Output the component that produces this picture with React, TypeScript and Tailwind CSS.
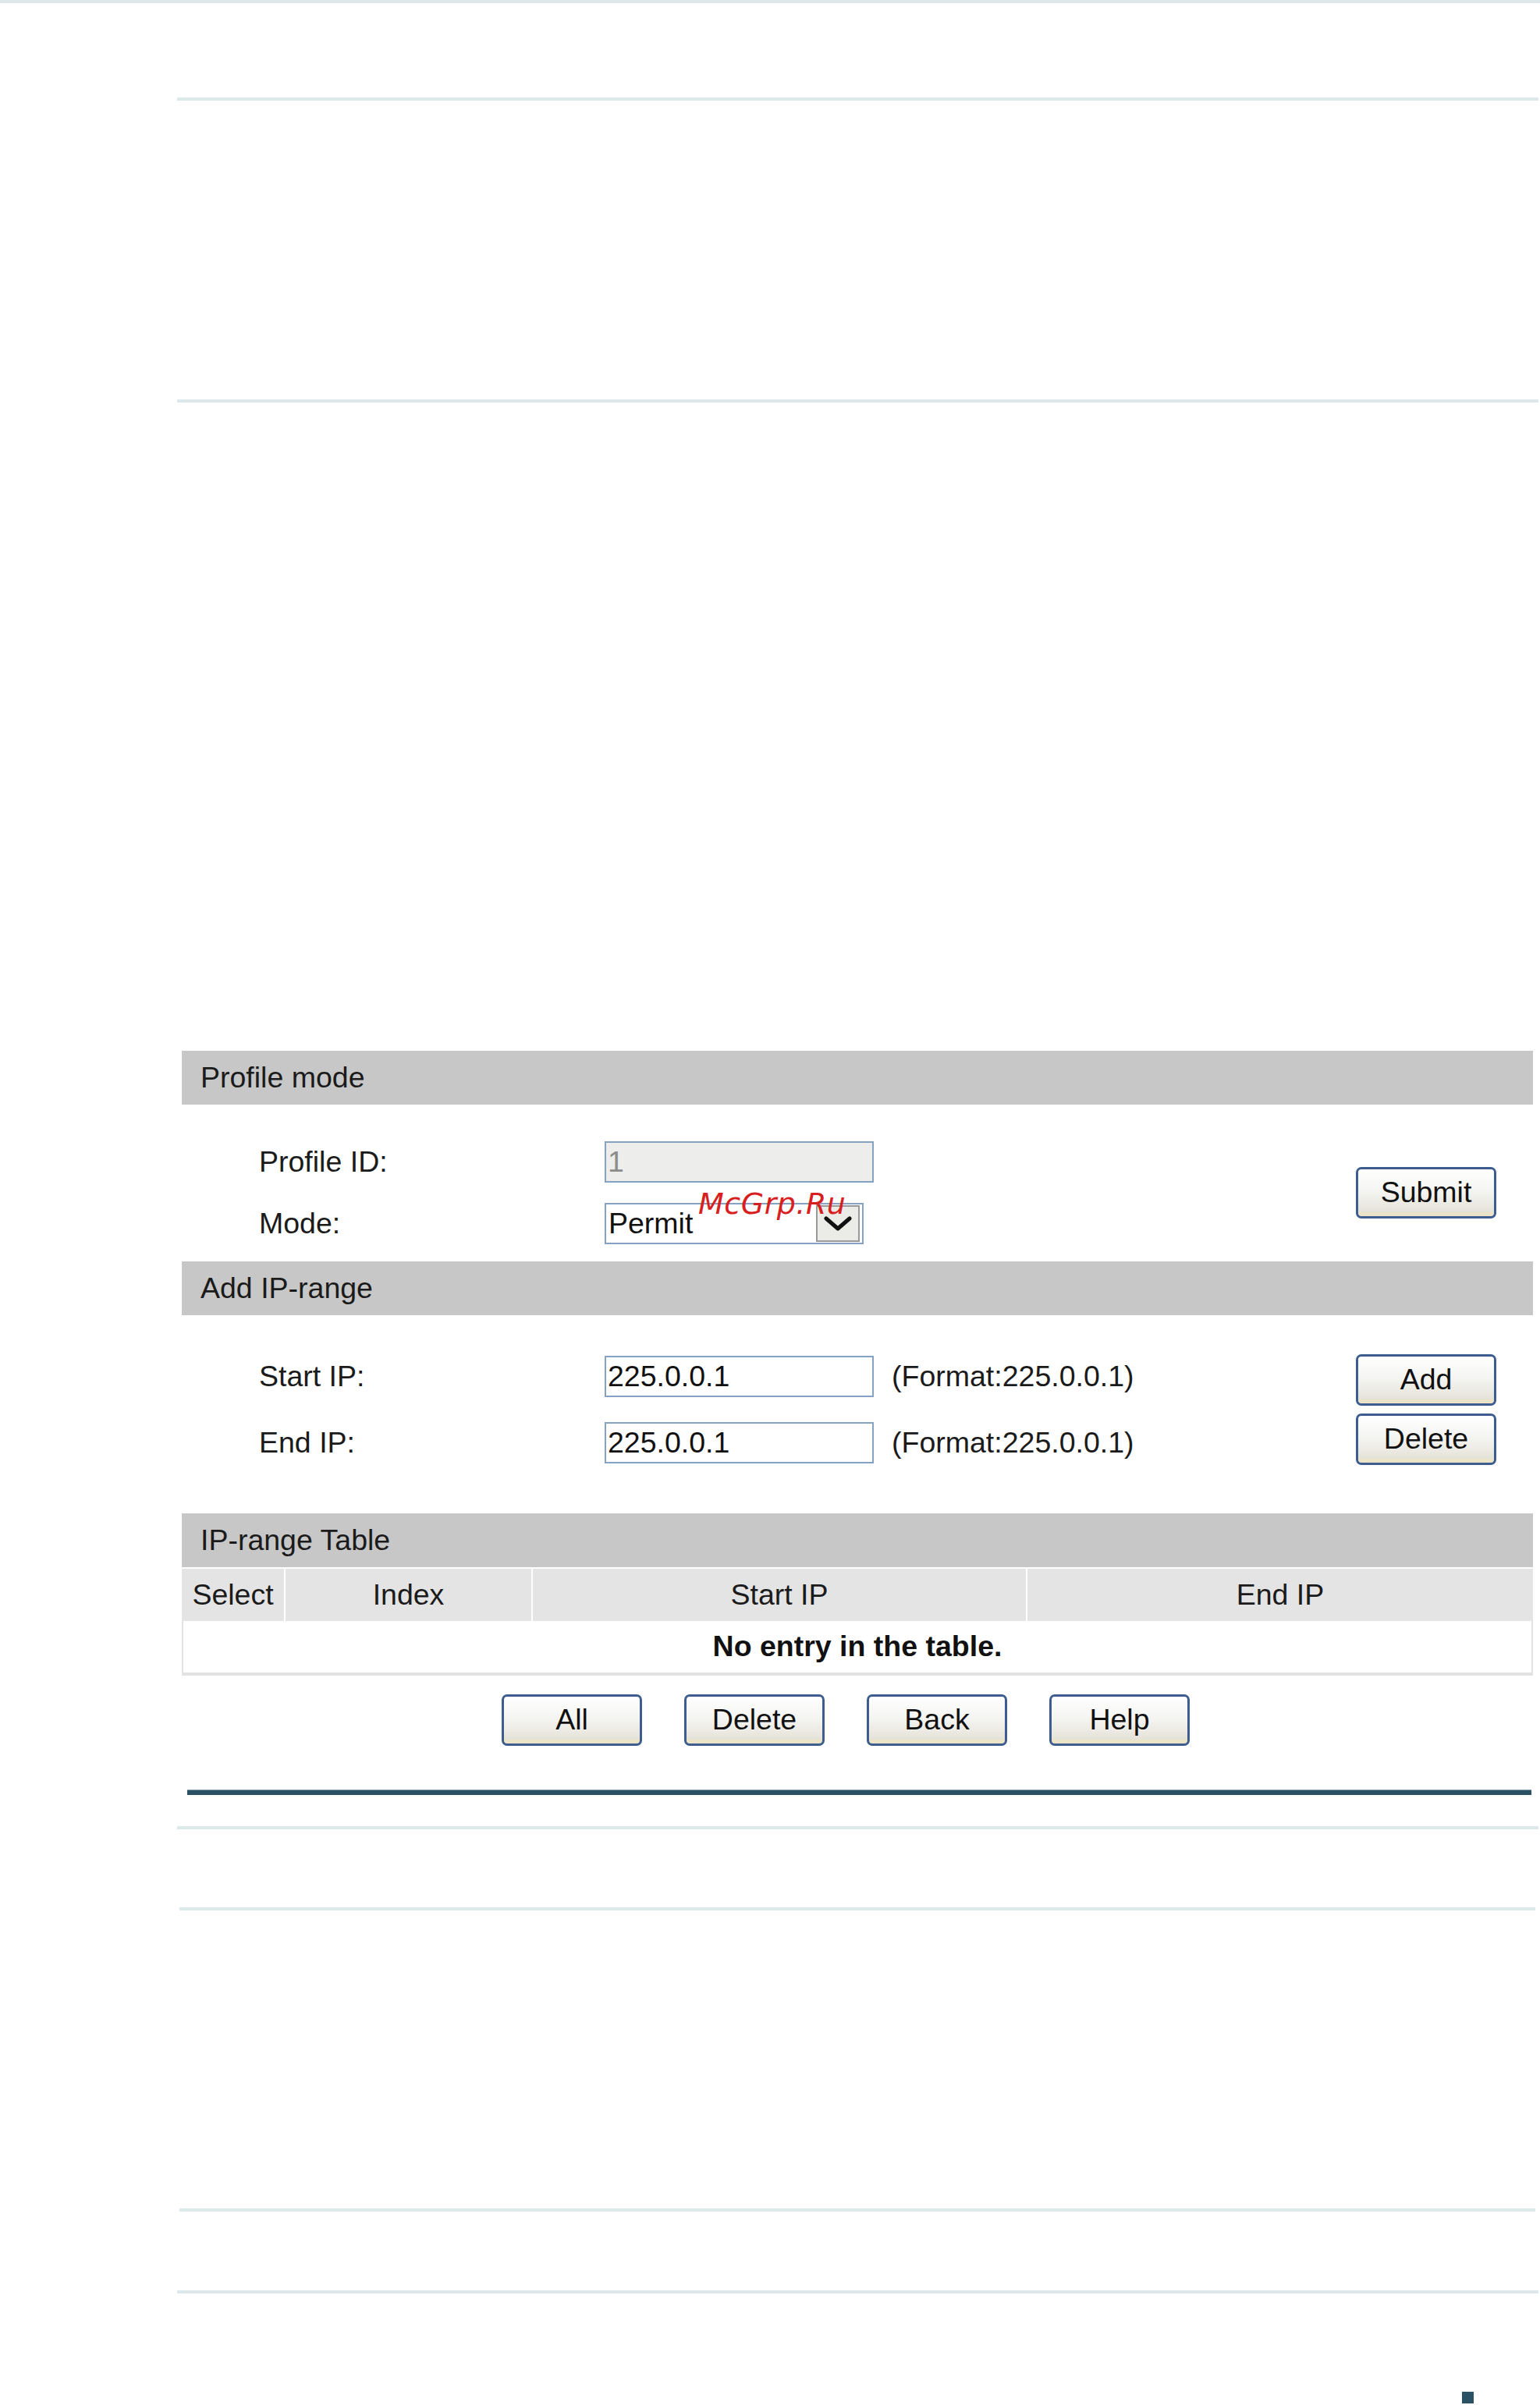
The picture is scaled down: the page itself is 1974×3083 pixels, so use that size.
const font = "font-['Liberation_Sans',Arial,sans-serif]";

function Rule({ className = "" }: { className?: string }) {
  return <div className={`h-[4px] bg-[#dde8ea] ${className}`} />;
}

function XpButton({ label, className = "" }: { label: string; className?: string }) {
  return (
    <button
      type="button"
      className={`flex h-[66px] w-[180px] items-center justify-center rounded-[7px] border-[3px] border-[#3c5d8d] bg-linear-to-b from-[#ffffff] via-[#f3f3f0] to-[#e2dfd3] text-[37.5px] leading-none text-[#111] shadow-[inset_0_-5px_0_#ece4c8] ${className}`}
    >
      {label}
    </button>
  );
}

function SectionHeader({ title }: { title: string }) {
  return (
    <div className="flex h-[69px] items-center bg-[#c7c7c7] pl-[24px] text-[37.5px] leading-none text-[#1b1b1b]">
      {title}
    </div>
  );
}

function TextBox({ value, disabled = false }: { value: string; disabled?: boolean }) {
  return (
    <div
      className={`flex h-[53px] w-[345px] items-center border-2 border-[#86a2c2] pl-[2px] text-[37.5px] leading-none ${
        disabled ? "bg-[#ededeb] text-[#8c8c8c]" : "bg-white text-[#111]"
      }`}
    >
      {value}
    </div>
  );
}

function ModeSelect() {
  return (
    <div className="flex h-[53px] w-[332px] items-stretch border-2 border-[#86a2c2] bg-white">
      <div className="flex flex-1 items-center pl-[3px] text-[37.5px] leading-none text-[#111]">Permit</div>
      <div className="my-[1px] mr-[3px] flex w-[56px] items-start justify-center border-2 border-[#9a9a9a] bg-[#ebebe8] pt-[12px]">
        <svg width="36" height="20" viewBox="0 0 36 20">
          <path d="M3 3 L18 16 L33 3" fill="none" stroke="#111" strokeWidth="5" strokeLinecap="round" strokeLinejoin="round" />
        </svg>
      </div>
    </div>
  );
}

function FieldRow({ label, children }: { label: string; children: React.ReactNode }) {
  return (
    <div className="flex h-[53px] items-center">
      <div className="w-[542px] pl-[99px] text-[37.5px] leading-none text-[#1b1b1b]">{label}</div>
      {children}
    </div>
  );
}

const columns = [
  { label: "Select", w: "w-[131px]" },
  { label: "Index", w: "w-[315px]" },
  { label: "Start IP", w: "w-[632px]" },
  { label: "End IP", w: "flex-1" },
];

export default function App() {
  return (
    <div className={`relative min-h-[3083px] w-[1974px] bg-white leading-none ${font}`}>
      <Rule />
      <Rule className="ml-[227px] mt-[121px] w-[1745px]" />
      <Rule className="ml-[227px] mt-[383px] w-[1745px]" />

      <div className="ml-[233px] mt-[831px] w-[1732px]">
        <SectionHeader title="Profile mode" />
        <div className="flex items-center pb-[22px] pt-[47px]">
          <div className="flex flex-1 flex-col gap-[26px]">
            <FieldRow label="Profile ID:">
              <TextBox value="1" disabled />
            </FieldRow>
            <FieldRow label="Mode:">
              <ModeSelect />
            </FieldRow>
          </div>
          <XpButton label="Submit" className="mr-[47px]" />
        </div>

        <SectionHeader title="Add IP-range" />
        <div className="flex items-center pb-[62px] pt-[50px]">
          <div className="flex flex-1 flex-col gap-[32px]">
            <FieldRow label="Start IP:">
              <TextBox value="225.0.0.1" />
              <span className="ml-[23px] text-[37.5px] leading-none text-[#1b1b1b]">(Format:225.0.0.1)</span>
            </FieldRow>
            <FieldRow label="End IP:">
              <TextBox value="225.0.0.1" />
              <span className="ml-[23px] text-[37.5px] leading-none text-[#1b1b1b]">(Format:225.0.0.1)</span>
            </FieldRow>
          </div>
          <div className="mr-[47px] flex flex-col gap-[10px]">
            <XpButton label="Add" />
            <XpButton label="Delete" />
          </div>
        </div>

        <SectionHeader title="IP-range Table" />
        <div className="mt-[2px] flex h-[67px] gap-[2px]">
          {columns.map((c) => (
            <div
              key={c.label}
              className={`${c.w} flex items-center justify-center bg-[#e4e4e4] text-[37.5px] text-[#1b1b1b]`}
            >
              {c.label}
            </div>
          ))}
        </div>
        <div className="flex h-[70px] items-center justify-center border-x-2 border-b-[4px] border-[#e2e2e2] text-[37.5px] font-bold text-[#111]">
          No entry in the table.
        </div>

        <div className="mt-[24px] flex gap-[54px] pl-[410px]">
          <XpButton label="All" />
          <XpButton label="Delete" />
          <XpButton label="Back" />
          <XpButton label="Help" />
        </div>
      </div>

      <div className="ml-[240px] mt-[56px] h-[7px] w-[1723px] border-t border-[#8aa0aa] bg-[#2b5264]" />

      <Rule className="ml-[227px] mt-[40px] w-[1745px]" />
      <Rule className="ml-[230px] mt-[100px] w-[1738px]" />
      <Rule className="ml-[230px] mt-[382px] w-[1738px]" />
      <Rule className="ml-[227px] mt-[101px] w-[1745px]" />

      <div className="ml-[1874px] mt-[126px] h-[15px] w-[15px] bg-[#2b5264]" />

      <span className="absolute left-[895px] top-[1524px] font-['DejaVu_Sans',sans-serif] text-[38px] italic leading-none tracking-[0.5px] text-[#d81e1e]">
        McGrp.Ru
      </span>
    </div>
  );
}
